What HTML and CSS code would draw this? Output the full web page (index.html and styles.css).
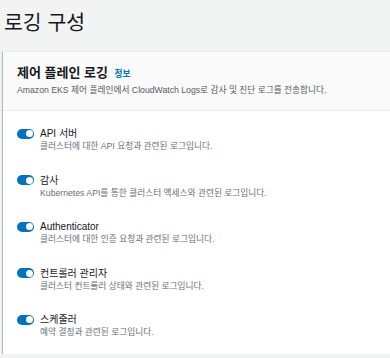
FILE: index.html
```html
<!DOCTYPE html>
<html lang="ko">
<head>
    <meta charset="UTF-8">
    <meta name="viewport" content="width=device-width, initial-scale=1.0">
    <title>로깅 구성</title>
    <link rel="stylesheet" href="styles.css">
</head>
<body>
    <h1 class="page-title">로깅 구성</h1>

    <div class="card">
        <div class="card-header">
            <h2 class="card-title">제어 플레인 로깅 <a href="#" class="info-link">정보</a></h2>
            <p class="card-desc">Amazon EKS 제어 플레인에서 CloudWatch Logs로 감사 및 진단 로그를 전송합니다.</p>
        </div>

        <div class="log-list">
            <div class="log-item">
                <span class="toggle"><span class="knob"></span></span>
                <div class="log-text">
                    <div class="log-label">API 서버</div>
                    <div class="log-desc">클러스터에 대한 API 요청과 관련된 로그입니다.</div>
                </div>
            </div>
            <div class="log-item">
                <span class="toggle"><span class="knob"></span></span>
                <div class="log-text">
                    <div class="log-label">감사</div>
                    <div class="log-desc">Kubernetes API를 통한 클러스터 액세스와 관련된 로그입니다.</div>
                </div>
            </div>
            <div class="log-item">
                <span class="toggle"><span class="knob"></span></span>
                <div class="log-text">
                    <div class="log-label">Authenticator</div>
                    <div class="log-desc">클러스터에 대한 인증 요청과 관련된 로그입니다.</div>
                </div>
            </div>
            <div class="log-item">
                <span class="toggle"><span class="knob"></span></span>
                <div class="log-text">
                    <div class="log-label">컨트롤러 관리자</div>
                    <div class="log-desc">클러스터 컨트롤러 상태와 관련된 로그입니다.</div>
                </div>
            </div>
            <div class="log-item">
                <span class="toggle"><span class="knob"></span></span>
                <div class="log-text">
                    <div class="log-label">스케줄러</div>
                    <div class="log-desc">예약 결정과 관련된 로그입니다.</div>
                </div>
            </div>
        </div>
    </div>
</body>
</html>
```

FILE: styles.css
```css
body, html {
    margin: 0;
    padding: 0;
    font-family: "Liberation Sans", "Noto Sans CJK KR", sans-serif;
    background-color: #f2f3f3;
    color: #16191f;
}

.page-title {
    margin: 0;
    padding: 10px 4px 0;
    font-size: 20.5px;
    line-height: 25px;
    font-weight: normal;
}

.card {
    margin: 16px 0 0 3px;
    background-color: #ffffff;
    border-top: 1px solid #eaeded;
    box-shadow: 0 1px 1px 0 rgba(0, 28, 36, 0.5), -1px 1px 1px 0 rgba(0, 28, 36, 0.2);
}

.card-header {
    background-color: #fafafa;
    border-bottom: 1px solid #eaeded;
    padding: 13px 14px 14px;
}

.card-title {
    margin: 0 0 2px;
    font-size: 13px;
    line-height: 16px;
    font-weight: bold;
}

.info-link {
    margin-left: 3px;
    font-size: 8.7px;
    font-weight: bold;
    color: #0073bb;
    text-decoration: none;
}

.card-desc {
    margin: 0;
    font-size: 8.7px;
    line-height: 12px;
    color: #545b64;
}

.log-list {
    display: flex;
    flex-direction: column;
    gap: 21.5px;
    padding: 16px 14px 16px;
}

.log-item {
    display: flex;
    gap: 6px;
}

.toggle {
    display: flex;
    justify-content: flex-end;
    align-items: center;
    box-sizing: border-box;
    width: 17px;
    height: 10px;
    margin-top: 1.5px;
    padding: 0 1.5px;
    border-radius: 5px;
    background-color: #0073bb;
}

.knob {
    width: 7px;
    height: 7px;
    border-radius: 50%;
    background-color: #ffffff;
}

.log-label {
    font-size: 10px;
    line-height: 13px;
}

.log-desc {
    font-size: 8.7px;
    line-height: 12px;
    color: #687078;
}
```
